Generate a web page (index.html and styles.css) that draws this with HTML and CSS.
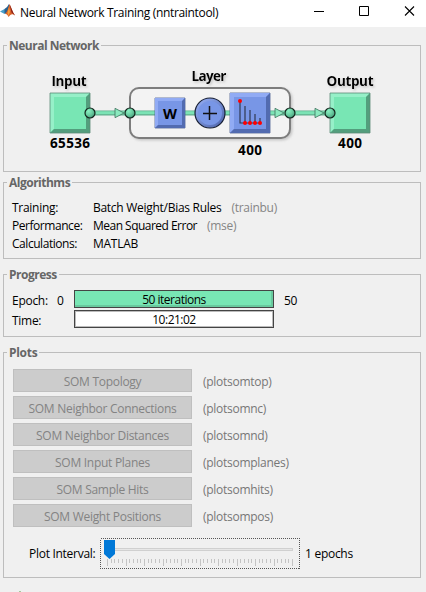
FILE: index.html
```
<!DOCTYPE html>
<html lang="en">
<head>
<meta charset="utf-8">
<title>Neural Network Training (nntraintool)</title>
<link rel="stylesheet" href="styles.css">
</head>
<body>
<header class="titlebar">
  <svg class="logo" width="16" height="18" viewBox="0 0 16 18">
    <path d="M0 10.5 4.5 8 8 11 4.5 13Z" fill="#4a9fc9"/>
    <path d="M4.5 8Q7 7 9 3L9.5 8 6.5 13 4.5 12Z" fill="#28608f"/>
    <path d="M9.5 3C11 6 12.5 11 15 14.5 12 12 10.5 13.5 8.5 16 8 14 6.5 12.5 5 13 7.500 11 8.500 6 9.500 3Z" fill="#d9622b"/>
    <path d="M9.500 3C11 6 12.500 11 15 14.500L11.500 11.500Z" fill="#8b2018"/>
    <path d="M9 6 10 11 8.500 15 7.500 12Z" fill="#f5a13a"/>
  </svg>
  <h1 class="caption">Neural Network Training (nntraintool)</h1>
  <svg class="controls" width="102" height="27" viewBox="0 0 102 27" fill="none" stroke="#000" stroke-width="1">
    <path d="M0 11.500H10M45.500 6.500h9v9h-9Z"/>
    <path d="M91 6.500 100 15.500M100 6.500 91 15.500" stroke-width="1.100"/>
  </svg>
</header>
<main>
  <section class="panel network">
    <h2 class="legend l1">Neural Network</h2>
    <svg class="diagram" width="320" height="95" viewBox="40 67 320 95">
      <defs>
        <filter id="soft" x="-20%" y="-30%" width="150%" height="180%"><feDropShadow dx="1.500" dy="1.500" stdDeviation=".8" flood-color="#888" flood-opacity=".4"/></filter>
        <radialGradient id="ball" cx=".35" cy=".3" r=".8"><stop offset="0" stop-color="#8af0c2"/><stop offset=".5" stop-color="#69cca0"/><stop offset="1" stop-color="#419474"/></radialGradient>
        <linearGradient id="disc" x1="0" y1="0" x2="1" y2="1"><stop offset="0" stop-color="#9ab2f7"/><stop offset="1" stop-color="#4a61a8"/></linearGradient>
        <g id="green">
          <path d="M0 0H40V40H0Z" fill="#78e6b4"/>
          <path d="M0 0H40L36 4H4V36L0 40Z" fill="#96f0c8"/>
          <path d="M40 0V40H0L4 36H36V4Z" fill="#539e7d"/>
          <path d="M0 0H40V40H0Z" fill="none" stroke="#5c8b77" stroke-width=".8"/>
        </g>
        <path id="arrow" d="M0-4.700 9 0 0 4.700Z" fill="#8be9bf" stroke="#3f725d" stroke-width=".8"/>
        <circle id="node" r="5" fill="url(#ball)" stroke="#14251e" stroke-width="1.200"/>
      </defs>
      <rect x="130" y="88" width="160" height="50" rx="9" fill="#f3f3f3" stroke="#7d7d7d" stroke-width="2" filter="url(#soft)"/>
      <path d="M90 113H330" stroke="#60ad8d" stroke-width="5"/>
      <path d="M90 112.700H330" stroke="#7be3b5" stroke-width="3"/>
      <use href="#green" x="50" y="93"/>
      <use href="#green" x="330" y="93"/>
      <g stroke-width=".8">
        <path d="M155 98h30v30h-30Z" fill="#7896e6" stroke="#4d5f92"/>
        <path d="M155 98h30l-3 3h-24v24l-3 3Z" fill="#91abf4"/>
        <path d="M185 98v30h-30l3-3h24v-24Z" fill="#526bb0"/>
        <path d="M230 93h40v40h-40Z" fill="#7896e6" stroke="#4d5f92"/>
        <path d="M230 93h40l-4 4h-32v32l-4 4Z" fill="#91abf4"/>
        <path d="M270 93v40h-40l4-4h32v-32Z" fill="#526bb0"/>
      </g>
      <circle cx="210" cy="113" r="15" fill="url(#disc)" stroke="#182034" stroke-width="1.200"/>
      <circle cx="210" cy="113" r="12" fill="#7896e6"/>
      <path d="M203 113.500h14M209.500 106v14" stroke="#111" stroke-width="1.500"/>
      <path d="M240 101v22h21M245 106v17M250 110v13M255 114v9M260 118v5" fill="none" stroke="#303951" stroke-width="1.200"/>
      <g fill="#f00"><circle cx="240" cy="101" r="2"/><circle cx="245" cy="123" r="2"/><circle cx="250" cy="123" r="2"/><circle cx="255" cy="123" r="2"/><circle cx="260" cy="123" r="2"/></g>
      <use href="#arrow" x="115" y="113"/><use href="#arrow" x="275" y="113"/><use href="#arrow" x="315" y="113"/>
      <use href="#node" x="90" y="113"/><use href="#node" x="130" y="113"/><use href="#node" x="290" y="113"/><use href="#node" x="330" y="113"/>
      <g class="label">
        <text x="51.500" y="86" textLength="35" filter="url(#soft)">Input</text>
        <text x="191.500" y="81" textLength="35" filter="url(#soft)">Layer</text>
        <text x="326.500" y="86" textLength="47" filter="url(#soft)">Output</text>
        <text x="50" y="148" textLength="40">65536</text>
        <text x="238" y="155" textLength="24">400</text>
        <text x="338" y="148" textLength="24">400</text>
        <text x="163" y="119" textLength="14" lengthAdjust="spacingAndGlyphs">W</text>
      </g>
    </svg>
  </section>
  <section class="panel algorithms">
    <h2 class="legend l2">Algorithms</h2>
    <dl class="facts">
      <dt class="training">Training:</dt><dd class="rules">Batch Weight/Bias Rules<span class="hint trainbu">(trainbu)</span></dd>
      <dt class="perf">Performance:</dt><dd class="mse">Mean Squared Error<span class="hint short">(mse)</span></dd>
      <dt class="calc">Calculations:</dt><dd class="matlab">MATLAB</dd>
    </dl>
  </section>
  <section class="panel progress">
    <h2 class="legend l3">Progress</h2>
    <div class="meters">
      <span>Epoch:</span><span>0</span><div class="meter full">50 iterations</div><span class="max">50</span>
      <span>Time:</span><span></span><div class="meter clock">10:21:02</div><span></span>
    </div>
  </section>
  <section class="panel plots">
    <h2 class="legend l4">Plots</h2>
    <div class="list">
      <button disabled>SOM Topology</button><span>(plotsomtop)</span>
      <button disabled>SOM Neighbor Connections</button><span>(plotsomnc)</span>
      <button disabled>SOM Neighbor Distances</button><span>(plotsomnd)</span>
      <button disabled>SOM Input Planes</button><span>(plotsomplanes)</span>
      <button disabled>SOM Sample Hits</button><span>(plotsomhits)</span>
      <button disabled>SOM Weight Positions</button><span>(plotsompos)</span>
    </div>
    <div class="interval">
      <span class="name">Plot Interval:</span>
      <svg class="slider" width="200" height="31" viewBox="0 0 200 31" shape-rendering="crispEdges">
        <rect x=".5" y=".5" width="199" height="30" fill="none" stroke="#555" stroke-dasharray="1 1"/>
        <rect x="6.500" y="10.500" width="186" height="2" fill="#e7e7e7" stroke="#d0d0d0"/>
        <g id="ticks" stroke="#c4c4c4"></g>
        <path d="M4 2h11v14l-5.500 5L4 16Z" fill="#0078d7" shape-rendering="auto"/>
      </svg>
      <span class="value">1 epochs</span>
    </div>
  </section>
</main>
<footer class="status"><i class="mark"></i></footer>
<script src="ticks.js"></script>
</body>
</html>
```
FILE: styles.css
```
* { box-sizing: border-box; }
body { margin: 0; width: 426px; height: 592px; overflow: hidden; background: #f0f0f0; color: #000; font: 12px/18px "Open Sans", "Noto Sans", sans-serif; letter-spacing: -.28px; white-space: nowrap; }
.titlebar { height: 27px; background: #fff; display: flex; align-items: flex-start; }
.logo { margin-top: 1px; }
.caption { margin: 4px 0 0 4px; font-size: 12px; line-height: 18px; font-weight: 400; width: 294px; letter-spacing: -.32px; }
main { padding: 18px 5px 0 3px; }
.panel { border: 1px solid #bdbdbd; width: 418px; }
.legend { margin: -9px 0 0 3px; padding: 0 2px; width: fit-content; font-size: 12px; line-height: 18px; height: 18px; font-weight: 700; color: #666; background: #f0f0f0; letter-spacing: -.5px; }
.l4 { letter-spacing: -.3px; }
.network { height: 127px; margin-bottom: 10px; }
.diagram { display: block; margin: 12px 0 0 36px; overflow: visible; }
.label { font: 700 13.500px "Open Sans", sans-serif; letter-spacing: 0; }
.algorithms { height: 77px; margin-bottom: 15px; }
.facts { margin: 7px 0 0 8px; display: grid; grid-template-columns: 81px auto; grid-auto-rows: 18px; }
.facts dd { margin: 0; }
.perf, .calc { letter-spacing: -.45px; }
.mse { letter-spacing: -.52px; }
.hint { color: #858585; margin-left: 10px; letter-spacing: -.28px; }
.progress { height: 63px; margin-bottom: 15px; }
.meters { margin: 6px 0 0 8px; display: grid; grid-template-columns: 45px 17px 200px auto; grid-auto-rows: 18px; row-gap: 2px; line-height: 21px; }
.meter { border: 1px solid #444; box-shadow: inset 0 0 0 1px #bbb; background: #fff; text-align: center; line-height: 17px; letter-spacing: -.5px; }
.full { background: #78e6b4; box-shadow: inset -2px -2px 0 #69c99e; }
.max { margin-left: 10px; }
.plots { height: 226px; }
.list { margin: 7px 0 0 9px; display: grid; grid-template-columns: 179px auto; column-gap: 11px; grid-auto-rows: 23px; row-gap: 4px; line-height: 25px; color: #777; }
.list button { margin: 0; padding: 2px 0 0; border: 1px solid #bfbfbf; background: #ccc; color: #838383; font: inherit; line-height: 19px; letter-spacing: inherit; }
.interval { display: flex; margin: 11px 0 0 25px; line-height: 32px; height: 31px; }
.name { width: 71px; }
.slider { display: block; }
.value { margin-left: 5px; }
.status { height: 14px; padding: 13px 0 0 19px; }
.mark { display: block; width: 2px; height: 1px; background: #a5c99c; }
```
FILE: ticks.js
```
const ticks = document.getElementById("ticks");
for (let i = 0; i <= 50; i++) {
  const line = document.createElementNS("http://www.w3.org/2000/svg", "path");
  const x = Math.round(7 + i * 3.7) + 0.5;
  line.setAttribute("d", `M${x} 21v${i % 5 === 0 ? 7 : 4}`);
  ticks.append(line);
}
```
